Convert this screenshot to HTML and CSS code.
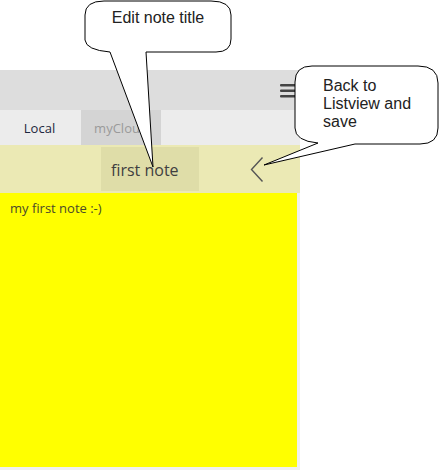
FILE: index.html
```html
<!DOCTYPE html>
<html>
<head>
<meta charset="utf-8">
<link rel="stylesheet" href="styles.css">
</head>
<body>
<div class="page">
  <div class="top-space"></div>
  <div class="app">
    <div class="header">
      <svg class="menu" width="18" height="15" viewBox="0 0 18 15">
        <rect x="0" y="1" width="17" height="2.6" rx="1" fill="#444"/>
        <rect x="0" y="6.5" width="17" height="2.6" rx="1" fill="#444"/>
        <rect x="0" y="12" width="17" height="2.6" rx="1" fill="#444"/>
      </svg>
    </div>
    <div class="tabs">
      <div class="tab active">Local</div>
      <div class="tab cloud">myCloud</div>
    </div>
    <div class="titlebar">
      <div class="title-input">first note</div>
      <svg class="back" width="16" height="28" viewBox="0 0 16 28">
        <polyline points="12.5,1.5 1.5,13.5 12.5,25.5" fill="none" stroke="#555" stroke-width="1.4"/>
      </svg>
    </div>
    <div class="note-wrap">
      <div class="note">my first note :-)</div>
    </div>
  </div>
  <svg class="callouts" width="439" height="470" viewBox="0 0 439 470">
    <path d="M110 52 L153 167 L146 52 L216 52 Q231 52 231 39 L231 15 Q231 1 211 1 L104 1 Q85 1 85 15 L85 40 Q86 50 110 52 Z" fill="#fff" stroke="#000" stroke-width="1"/>
    <text class="ctext" x="158" y="23" text-anchor="middle">Edit note title</text>
    <path d="M318 143 L264 165 L355 144 L420 144 Q438 144 438 128 L438 83 Q438 66 418 66 L312 66 Q295 66 295 82 L295 128 Q295 141 318 143 Z" fill="#fff" stroke="#000" stroke-width="1"/>
    <text class="ctext" x="323" y="91">Back to</text>
    <text class="ctext" x="323" y="109">Listview and</text>
    <text class="ctext" x="323" y="127">save</text>
  </svg>
</div>
</body>
</html>
```
FILE: styles.css
```css
html, body {
  margin: 0;
  padding: 0;
  background: #fff;
}
.page {
  position: relative;
  width: 439px;
  height: 470px;
  overflow: hidden;
  font-family: "Open Sans", "DejaVu Sans", sans-serif;
}
.top-space {
  height: 70px;
}
.app {
  width: 300px;
  height: 400px;
  background: #f0f0f0;
  display: flex;
  flex-direction: column;
}
.header {
  height: 40px;
  background: #dddddd;
  display: flex;
  align-items: center;
  justify-content: flex-end;
  padding-right: 2px;
}
.menu {
  display: block;
  margin-top: 1px;
}
.tabs {
  height: 35px;
  background: #ececec;
  display: flex;
}
.tab {
  width: 80px;
  display: flex;
  align-items: center;
  justify-content: center;
  font-size: 13px;
}
.tab.active {
  width: 81px;
  color: #1c2740;
  padding-right: 2px;
  box-sizing: border-box;
}
.tab.cloud {
  background: #d4d4d4;
  color: #9a9a9a;
}
.titlebar {
  height: 48px;
  background: #ebe9b4;
  display: flex;
  align-items: center;
  padding-left: 101px;
  box-sizing: border-box;
}
.title-input {
  width: 98px;
  height: 44px;
  background: #dfdda8;
  color: #404040;
  font-size: 16px;
  display: flex;
  align-items: center;
  padding-left: 10px;
  padding-top: 1px;
  box-sizing: border-box;
}
.back {
  display: block;
  margin-left: 51px;
  margin-top: 2px;
}
.note-wrap {
  flex: 1;
  padding: 0 3px 3px 0;
  display: flex;
}
.note {
  flex: 1;
  background: #ffff00;
  color: #4a4a2a;
  font-size: 13px;
  padding: 7px 10px;
  line-height: 16px;
}
.callouts {
  position: absolute;
  left: 0;
  top: 0;
}
.ctext {
  font-family: "Liberation Sans", Arial, sans-serif;
  font-size: 16px;
  fill: #222;
}
```
